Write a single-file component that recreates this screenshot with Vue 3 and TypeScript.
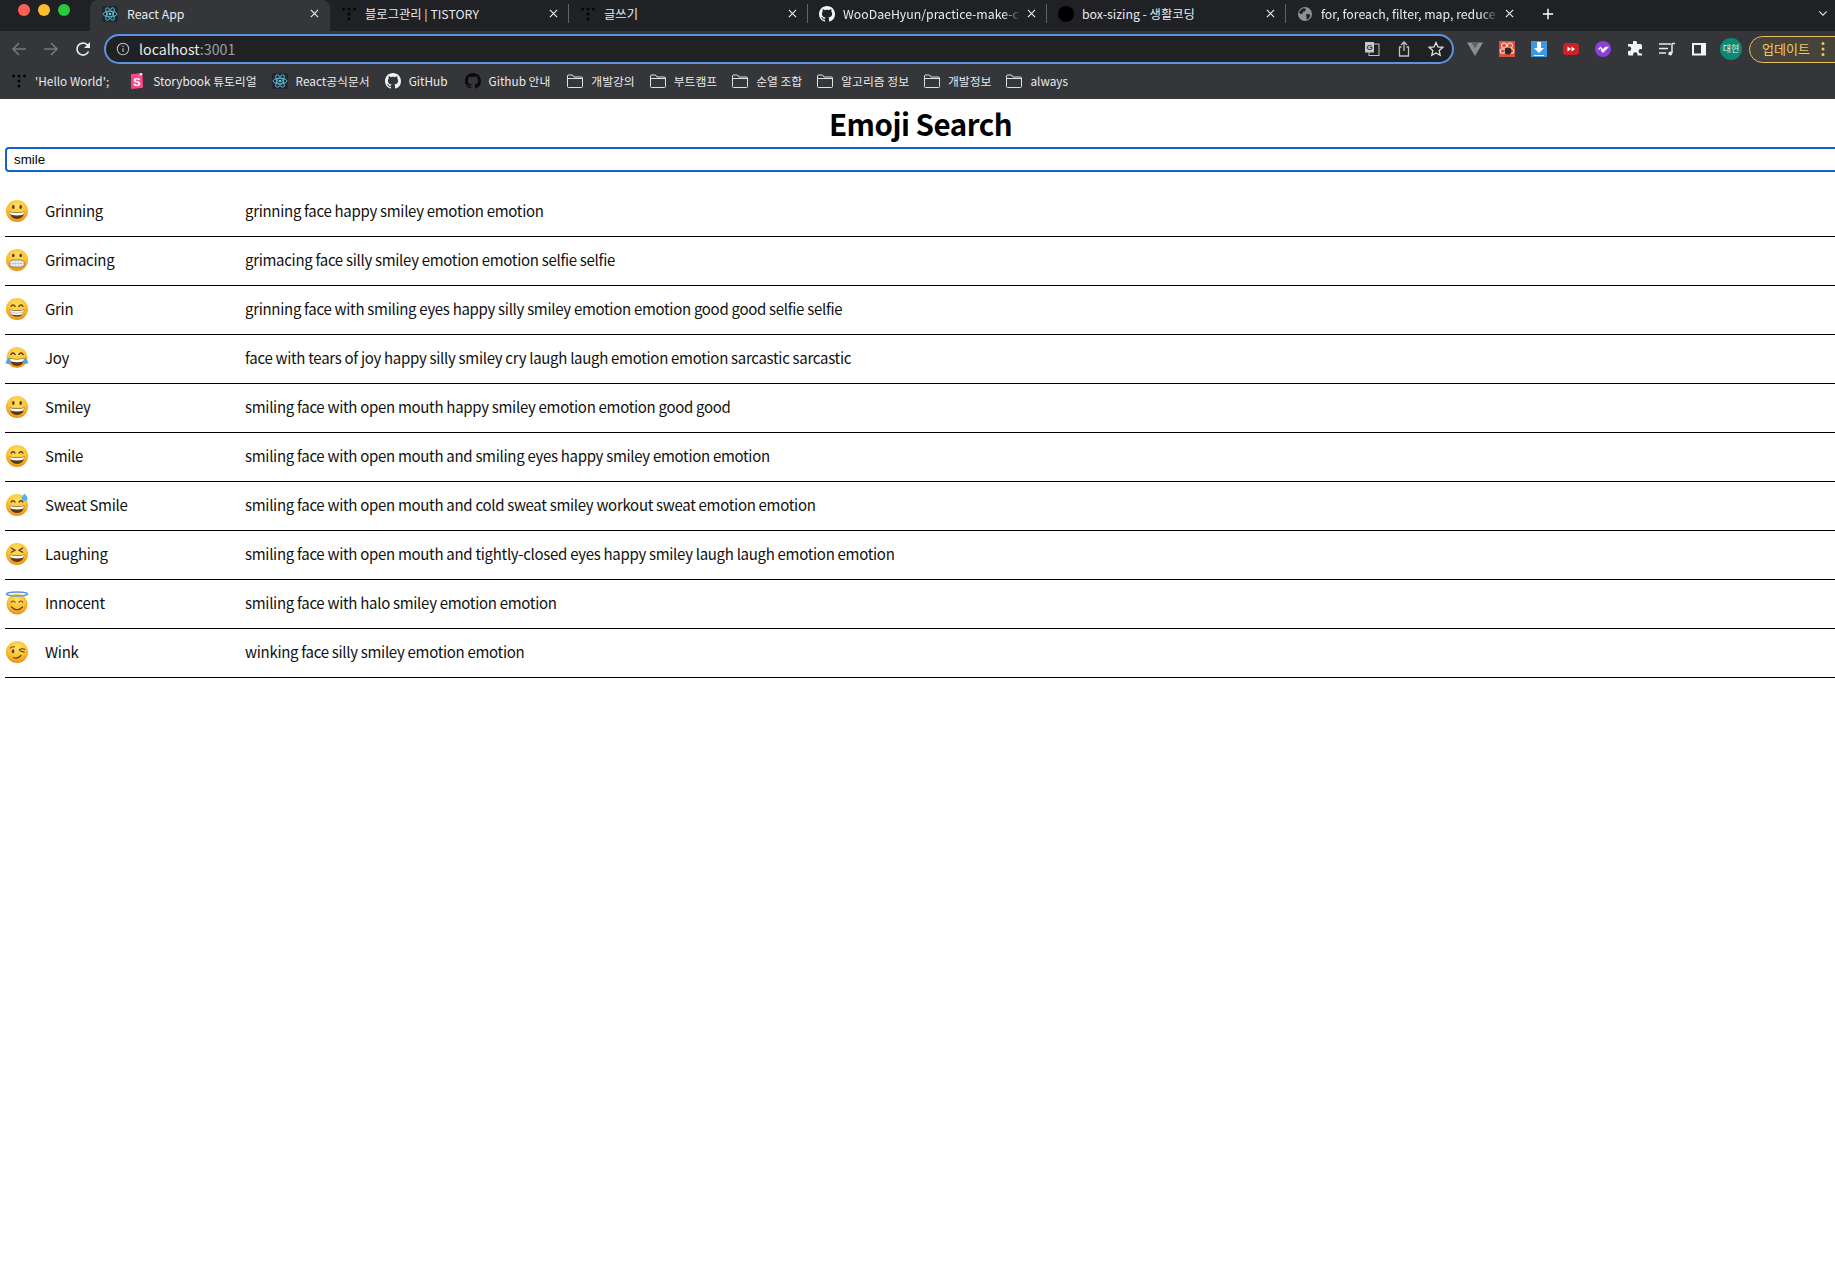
<template>
  <div class="window">
    <!-- shared icons -->
    <svg class="sprite" aria-hidden="true">
      <defs>
        <radialGradient id="face" cx="50%" cy="30%" r="75%">
          <stop offset="0" stop-color="#ffe168" />
          <stop offset="0.6" stop-color="#fbbf2d" />
          <stop offset="1" stop-color="#e8810f" />
        </radialGradient>
        <symbol id="react" viewBox="0 0 16 16">
          <rect width="16" height="16" rx="2" fill="#23272f" />
          <g fill="none" stroke="#5fd0ea" stroke-width="0.8">
            <ellipse cx="8" cy="8" rx="7" ry="2.8" />
            <ellipse cx="8" cy="8" rx="7" ry="2.8" transform="rotate(60 8 8)" />
            <ellipse cx="8" cy="8" rx="7" ry="2.8" transform="rotate(120 8 8)" />
          </g>
          <circle cx="8" cy="8" r="1.3" fill="#5fd0ea" />
        </symbol>
        <symbol id="tistory" viewBox="0 0 16 16">
          <g fill="#050505">
            <circle cx="2.5" cy="3" r="1.5" />
            <circle cx="8" cy="3" r="1.5" />
            <circle cx="13.5" cy="3" r="1.5" />
            <circle cx="8" cy="8" r="1.5" />
            <circle cx="8" cy="13" r="1.5" />
          </g>
        </symbol>
        <symbol id="github" viewBox="0 0 16 16">
          <path
            fill="currentColor"
            d="M8 0C3.58 0 0 3.58 0 8c0 3.54 2.29 6.53 5.47 7.59.4.07.55-.17.55-.38 0-.19-.01-.82-.01-1.49-2.01.37-2.53-.49-2.69-.94-.09-.23-.48-.94-.82-1.13-.28-.15-.68-.52-.01-.53.63-.01 1.08.58 1.23.82.72 1.21 1.87.87 2.33.66.07-.52.28-.87.51-1.07-1.78-.2-3.64-.89-3.64-3.95 0-.87.31-1.59.82-2.15-.08-.2-.36-1.02.08-2.12 0 0 .67-.21 2.2.82.64-.18 1.32-.27 2-.27s1.36.09 2 .27c1.53-1.04 2.2-.82 2.2-.82.44 1.1.16 1.92.08 2.12.51.56.82 1.27.82 2.15 0 3.07-1.87 3.75-3.65 3.95.29.25.54.73.54 1.48 0 1.07-.01 1.93-.01 2.2 0 .21.15.46.55.38A8.01 8.01 0 0 0 16 8c0-4.42-3.58-8-8-8z"
          />
        </symbol>
        <symbol id="folder" viewBox="0 0 16 14">
          <path
            fill="none"
            stroke="#dfe1e5"
            stroke-width="1"
            d="M.5 2A1 1 0 0 1 1.5 1h4l1.5 2h7.5a1 1 0 0 1 1 1v8.5a1 1 0 0 1-1 1h-13a1 1 0 0 1-1-1zM.5 4.5h15"
          />
        </symbol>
        <symbol id="storybook" viewBox="0 0 16 16">
          <path fill="#ff4785" d="M2 1.2 13.4 0l.6 14.8L2.2 16z" />
          <path fill="#fff" d="M10.8.3v2.4l1.3-.8 1 .7V.2z" />
          <text x="8" y="12.5" text-anchor="middle" class="sb-letter">S</text>
        </symbol>
        <symbol id="globe" viewBox="0 0 16 16">
          <circle cx="8" cy="8" r="7" fill="#8d9094" />
          <path
            fill="#202124"
            d="M4 3.5 7 2l2 1.2-1 2-2 .5-.5 2-2 .2-1.5-1.5zM9 8l3.5.2.8 1.8L11 13.5l-1.5-.5L9.5 10.500z"
          />
        </symbol>

        <symbol id="e-grinning" viewBox="0 0 24 24">
          <circle cx="12" cy="12" r="11" fill="url(#face)" />
          <ellipse cx="8.300" cy="8" rx="1.300" ry="2" fill="#5b3a13" />
          <ellipse cx="15.700" cy="8" rx="1.300" ry="2" fill="#5b3a13" />
          <path d="M4.500 12.500Q12 14.500 19.500 12.500 18.500 20 12 20 5.500 20 4.500 12.500Z" fill="#5b3a13" />
          <path d="M5 13Q12 15 19 13 18.800 15 18 15.800 12 17.300 6 15.800 5.200 15 5 13Z" fill="#fff" />
        </symbol>
        <symbol id="e-grimacing" viewBox="0 0 24 24">
          <circle cx="12" cy="12" r="11" fill="url(#face)" />
          <ellipse cx="8.300" cy="7.500" rx="1.300" ry="1.800" fill="#5b3a13" />
          <ellipse cx="15.700" cy="7.500" rx="1.300" ry="1.800" fill="#5b3a13" />
          <rect x="4.500" y="12" width="15" height="7" rx="3.400" fill="#f4f5f6" stroke="#6b4a1c" stroke-width="0.600" />
          <path d="M4.500 15.500h15M8 12.200v6.600M10.700 12v7M13.300 12v7M16 12.200v6.600" stroke="#a3a6aa" stroke-width="0.500" />
        </symbol>
        <symbol id="e-grin" viewBox="0 0 24 24">
          <circle cx="12" cy="12" r="11" fill="url(#face)" />
          <path d="M5.800 9.800Q8 5.800 10.500 9.800M13.500 9.800Q16 5.800 18.200 9.800" fill="none" stroke="#5b3a13" stroke-width="1.300" />
          <path d="M4.500 12.500Q12 14.500 19.500 12.500 18.500 19.800 12 19.800 5.500 19.800 4.500 12.500Z" fill="#5b3a13" />
          <path d="M5 13Q12 15 19 13 18.500 17 17 17.500 12 19 7 17.500 5.500 17 5 13Z" fill="#f4f5f6" />
          <path d="M5.300 15.300Q12 17 18.700 15.300" fill="none" stroke="#9a9da1" stroke-width="0.500" />
        </symbol>
        <symbol id="e-joy" viewBox="0 0 24 24">
          <circle cx="12" cy="11.500" r="10.500" fill="url(#face)" />
          <path d="M5.500 9Q8 5 10.500 9M13.500 9Q16 5 18.500 9" fill="none" stroke="#5b3a13" stroke-width="1.300" />
          <path d="M4.500 12Q12 14 19.500 12 18.500 20 12 20 5.500 20 4.500 12Z" fill="#5b3a13" />
          <path d="M5 12.500Q12 14.500 19 12.500 18.800 15 18 15.500 12 17 6 15.500 5.200 15 5 12.500Z" fill="#fff" />
          <path d="M3.800 11.500Q6 15 5.500 17.500 3 18.800 0.500 17 1.200 14 3.800 11.500Z" fill="#4aa8ea" />
          <path d="M20.200 11.500Q18 15 18.500 17.500 21 18.800 23.500 17 22.800 14 20.200 11.500Z" fill="#4aa8ea" />
        </symbol>
        <symbol id="e-smile" viewBox="0 0 24 24">
          <circle cx="12" cy="12" r="11" fill="url(#face)" />
          <path d="M5.800 9.500Q8 6 10.400 9.500M13.600 9.500Q16 6 18.200 9.500" fill="none" stroke="#5b3a13" stroke-width="1.300" />
          <path d="M4.500 12.500Q12 14.500 19.500 12.500 18.500 20 12 20 5.500 20 4.500 12.500Z" fill="#5b3a13" />
          <path d="M5 13Q12 15 19 13 18.800 15 18 15.800 12 17.300 6 15.800 5.200 15 5 13Z" fill="#fff" />
        </symbol>
        <symbol id="e-sweat" viewBox="0 0 24 24">
          <circle cx="12" cy="12" r="11" fill="url(#face)" />
          <path d="M5.800 9.500Q8 6 10.400 9.500M13.600 9.500Q16 6 18.200 9.500" fill="none" stroke="#5b3a13" stroke-width="1.300" />
          <path d="M4.500 12.500Q12 14.500 19.500 12.500 18.500 20 12 20 5.500 20 4.500 12.500Z" fill="#5b3a13" />
          <path d="M5 13Q12 15 19 13 18.800 15 18 15.800 12 17.300 6 15.800 5.200 15 5 13Z" fill="#fff" />
          <path d="M19.500 0.500Q22.800 4 22.500 5.800 22 8 19.500 8 17 8 16.500 5.800 16.500 4 19.500 0.500Z" fill="#56b2ee" />
        </symbol>
        <symbol id="e-laughing" viewBox="0 0 24 24">
          <circle cx="12" cy="12" r="11" fill="url(#face)" />
          <path d="M5.800 5.800 10 8.300 5.800 10.500M18.200 5.800 14 8.300 18.200 10.500" fill="none" stroke="#5b3a13" stroke-width="1.300" />
          <path d="M4.500 12.500Q12 14.500 19.500 12.500 18.500 20 12 20 5.500 20 4.500 12.500Z" fill="#5b3a13" />
          <path d="M5 13Q12 15 19 13 18.800 15 18 15.800 12 17.300 6 15.800 5.200 15 5 13Z" fill="#fff" />
        </symbol>
        <symbol id="e-innocent" viewBox="0 0 24 24">
          <circle cx="12" cy="13" r="10.500" fill="url(#face)" />
          <ellipse cx="12" cy="3" rx="10.500" ry="2" fill="none" stroke="#5b93ea" stroke-width="1.500" />
          <path d="M6 11.500Q8 8.500 10.400 11.500M13.600 11.500Q16 8.500 18 11.500" fill="none" stroke="#5b3a13" stroke-width="1.200" />
          <path d="M6.500 16Q12 21.500 17.500 16" fill="none" stroke="#5b3a13" stroke-width="1.200" stroke-linecap="round" />
        </symbol>
        <symbol id="e-wink" viewBox="0 0 24 24">
          <circle cx="12" cy="12" r="11" fill="url(#face)" />
          <path d="M5 8.300Q7 6.300 9.800 7M14 9.800Q17 7.800 20 9.500M14.300 10.500 19.500 12.300" fill="none" stroke="#5b3a13" stroke-width="1.100" />
          <ellipse cx="8" cy="11.300" rx="1.300" ry="2" fill="#5b3a13" />
          <path d="M8.500 17.500Q12.500 19.500 16 15.500" fill="none" stroke="#5b3a13" stroke-width="1.200" stroke-linecap="round" />
        </symbol>
      </defs>
    </svg>

    <header class="chrome">
      <div class="tabstrip">
        <div class="lights">
          <i class="traffic red" />
          <i class="traffic amber" />
          <i class="traffic green" />
        </div>
        <div v-for="(tab, i) in tabs" :key="tab.title" class="tab" :class="{ active: i === 0 }">
          <svg v-if="tab.icon" class="tab-icon"><use :href="'#' + tab.icon" /></svg>
          <i v-else class="tab-icon black-dot" />
          <span class="tab-title" :class="{ fade: tab.fade }">{{ tab.title }}</span>
          <svg class="tab-close" viewBox="0 0 10 10">
            <path d="M1 1l8 8M9 1l-8 8" stroke="#e8eaed" stroke-width="1.300" />
          </svg>
        </div>
        <svg class="new-tab" viewBox="0 0 14 14">
          <path d="M7 1v12M1 7h12" stroke="#fff" stroke-width="1.700" />
        </svg>
        <svg class="tab-menu" viewBox="0 0 12 8">
          <path d="M1.500 1.500 6 6l4.500-4.500" fill="none" stroke="#dfe1e5" stroke-width="1.400" />
        </svg>
      </div>

      <div class="toolbar">
        <svg class="nav-icon" viewBox="0 0 16 16">
          <path d="M15 8H2M8 2 2 8l6 6" fill="none" stroke="#75777b" stroke-width="1.600" />
        </svg>
        <svg class="nav-icon" viewBox="0 0 16 16">
          <path d="M1 8h13M8 2l6 6-6 6" fill="none" stroke="#75777b" stroke-width="1.600" />
        </svg>
        <svg class="nav-icon" viewBox="0 0 16 16">
          <path d="M13.500 10.500A6 6 0 1 1 12.300 3.800L14 5.500" fill="none" stroke="#e8eaed" stroke-width="1.700" />
          <path d="M15 1v6H9z" fill="#e8eaed" />
        </svg>

        <div class="omnibox">
          <svg class="omni-info" viewBox="0 0 16 16">
            <circle cx="8" cy="8" r="6.500" fill="none" stroke="#bdc1c6" stroke-width="1.200" />
            <path d="M8 7v4.500M8 4.300v1.400" stroke="#bdc1c6" stroke-width="1.300" />
          </svg>
          <span class="omni-url">localhost<span class="omni-port">:3001</span></span>
          <div class="omni-actions">
            <svg class="omni-icon" viewBox="0 0 16 16">
              <rect x="5" y="3" width="10" height="11.500" fill="none" stroke="#bdc1c6" />
              <rect x="1" y="1" width="9" height="10.500" fill="#c4c7cb" />
              <text x="5.500" y="9" text-anchor="middle" class="tr-letter">G</text>
            </svg>
            <svg class="omni-icon" viewBox="0 0 16 16">
              <path d="M5.500 6H3.500v9h9V6h-2M8 10V1.500M5 4l3-3 3 3" fill="none" stroke="#bdc1c6" stroke-width="1.300" />
            </svg>
            <svg class="omni-icon" viewBox="0 0 16 16">
              <path d="M8 1.500l2 4.400 4.800.5-3.600 3.200 1 4.700L8 11.900 3.800 14.300l1-4.700L1.200 6.400 6 5.900z" fill="none" stroke="#dfe1e5" stroke-width="1.300" />
            </svg>
          </div>
        </div>

        <div class="extensions">
          <svg class="ext" viewBox="0 0 16 16">
            <path d="M0 1.500h16L8 15z" fill="#8d8f91" />
            <path d="M4.500 1.500h7L8 7.500z" fill="#5f6164" />
          </svg>
          <svg class="ext" viewBox="0 0 16 16">
            <rect width="16" height="16" fill="#d9503f" />
            <circle cx="5" cy="4.500" r="2.500" fill="none" stroke="#f6d6d0" stroke-width="1.100" />
            <circle cx="11" cy="4.500" r="2.500" fill="none" stroke="#f6d6d0" stroke-width="1.100" />
            <circle cx="3.500" cy="10" r="2.300" fill="none" stroke="#f6d6d0" stroke-width="1.100" />
            <circle cx="12.500" cy="10" r="2.300" fill="none" stroke="#f6d6d0" stroke-width="1.100" />
            <circle cx="9" cy="10" r="3.400" fill="#33211e" />
          </svg>
          <svg class="ext" viewBox="0 0 16 16">
            <rect width="16" height="16" fill="#3d9ae0" />
            <path d="M6 1h4v6h3L8 12 3 7h3zM3 14h10v1H3z" fill="#fff" />
          </svg>
          <svg class="ext" viewBox="0 0 16 16">
            <rect y="2" width="16" height="12" rx="3.500" fill="#cf2027" />
            <path d="M4.500 5.500 8 8l-3.500 2.500zM8.500 5.500 12 8l-3.500 2.500z" fill="#fff" />
          </svg>
          <svg class="ext" viewBox="0 0 16 16">
            <circle cx="8" cy="8" r="8" fill="#8b3fd9" />
            <path d="M3.500 8.500l2-2 2.500 2.500 2.500-2.500h2l-4.500 4.500-2-2" fill="none" stroke="#fff" stroke-width="1.300" />
          </svg>
          <svg class="ext" viewBox="0 0 16 16">
            <path
              fill="#f1f3f4"
              d="M6 .5a2.200 2.200 0 0 1 4 1.300V3h3.500A1.500 1.500 0 0 1 15 4.500V8h-1.200a2.200 2.200 0 0 0 0 4.500H15v2H10.500v-1a2.200 2.200 0 0 0-4.400 0v1H2.500A1.500 1.500 0 0 1 1 13V10h1a2.200 2.200 0 0 0 0-4.500H1V3h5z"
            />
          </svg>
          <svg class="ext" viewBox="0 0 16 16">
            <path d="M0 3h12M0 7.500h9M0 12h7" stroke="#e8eaed" stroke-width="1.300" />
            <path d="M13 2.500h3M13 2.500V12" fill="none" stroke="#e8eaed" stroke-width="1.500" />
            <circle cx="11.300" cy="12.500" r="2" fill="#e8eaed" />
          </svg>
          <svg class="ext" viewBox="0 0 16 16">
            <rect x="1" y="2" width="14" height="12.500" fill="#f4f5f6" />
            <rect x="3" y="4" width="7" height="8.500" fill="#35363a" />
          </svg>
          <span class="avatar">대현</span>
        </div>

        <div class="update">
          <span>업데이트</span>
          <svg class="update-dots" viewBox="0 0 4 16">
            <circle cx="2" cy="2.500" r="1.500" />
            <circle cx="2" cy="8" r="1.500" />
            <circle cx="2" cy="13.500" r="1.500" />
          </svg>
        </div>
      </div>

      <div class="bookmarks">
        <div v-for="mark in bookmarks" :key="mark.label" class="bookmark" :class="{ dark: mark.dark }">
          <svg class="bookmark-icon"><use :href="'#' + mark.icon" /></svg>
          <span>{{ mark.label }}</span>
        </div>
      </div>
    </header>

    <main class="page">
      <h1 class="title">Emoji Search</h1>
      <input v-model="query" class="search" type="text" />
      <ul class="results">
        <li v-for="row in rows" :key="row.name" class="result">
          <svg class="emoji"><use :href="'#e-' + row.emoji" /></svg>
          <span class="name">{{ row.name }}</span>
          <span class="keywords">{{ row.keywords }}</span>
        </li>
      </ul>
    </main>
  </div>
</template>

<script setup lang="ts">
import { ref } from 'vue';

interface Tab {
  title: string;
  icon: string;
  fade?: boolean;
}

const query = ref('smile');

const tabs: Tab[] = [
  { title: 'React App', icon: 'react' },
  { title: '블로그관리 | TISTORY', icon: 'tistory' },
  { title: '글쓰기', icon: 'tistory' },
  { title: 'WooDaeHyun/practice-make-c', icon: 'github', fade: true },
  { title: 'box-sizing - 생활코딩', icon: '' },
  { title: 'for, foreach, filter, map, reduce', icon: 'globe', fade: true },
];

const bookmarks = [
  { label: "'Hello World';", icon: 'tistory' },
  { label: 'Storybook 튜토리얼', icon: 'storybook' },
  { label: 'React공식문서', icon: 'react' },
  { label: 'GitHub', icon: 'github' },
  { label: 'Github 안내', icon: 'github', dark: true },
  { label: '개발강의', icon: 'folder' },
  { label: '부트캠프', icon: 'folder' },
  { label: '순열 조합', icon: 'folder' },
  { label: '알고리즘 정보', icon: 'folder' },
  { label: '개발정보', icon: 'folder' },
  { label: 'always', icon: 'folder' },
];

const rows = [
  { emoji: 'grinning', name: 'Grinning', keywords: 'grinning face happy smiley emotion emotion' },
  { emoji: 'grimacing', name: 'Grimacing', keywords: 'grimacing face silly smiley emotion emotion selfie selfie' },
  { emoji: 'grin', name: 'Grin', keywords: 'grinning face with smiling eyes happy silly smiley emotion emotion good good selfie selfie' },
  { emoji: 'joy', name: 'Joy', keywords: 'face with tears of joy happy silly smiley cry laugh laugh emotion emotion sarcastic sarcastic' },
  { emoji: 'grinning', name: 'Smiley', keywords: 'smiling face with open mouth happy smiley emotion emotion good good' },
  { emoji: 'smile', name: 'Smile', keywords: 'smiling face with open mouth and smiling eyes happy smiley emotion emotion' },
  { emoji: 'sweat', name: 'Sweat Smile', keywords: 'smiling face with open mouth and cold sweat smiley workout sweat emotion emotion' },
  { emoji: 'laughing', name: 'Laughing', keywords: 'smiling face with open mouth and tightly-closed eyes happy smiley laugh laugh emotion emotion' },
  { emoji: 'innocent', name: 'Innocent', keywords: 'smiling face with halo smiley emotion emotion' },
  { emoji: 'wink', name: 'Wink', keywords: 'winking face silly smiley emotion emotion' },
];
</script>

<style scoped>
.window {
  width: 1835px;
  height: 1287px;
  overflow: hidden;
  background: #fff;
  font-family: 'Noto Sans CJK KR', 'Noto Sans', sans-serif;
}

.sprite {
  position: absolute;
  width: 0;
  height: 0;
}

.sb-letter {
  font: 700 11px 'Liberation Sans', sans-serif;
  fill: #fff;
}

.tr-letter {
  font: 700 8px 'Liberation Sans', sans-serif;
  fill: #35363a;
}

/* browser chrome */
.chrome {
  height: 99px;
  background: #35363a;
  color: #e8eaed;
}

.tabstrip {
  height: 31px;
  display: flex;
  align-items: stretch;
  background: #202124;
  padding-right: 7px;
}

.lights {
  width: 90px;
  flex: none;
  display: flex;
  gap: 8px;
  padding: 4px 0 0 18px;
  box-sizing: border-box;
}

.traffic {
  width: 12px;
  height: 12px;
  border-radius: 50%;
}

.red { background: #ff5f57; }
.amber { background: #febc2e; }
.green { background: #28c840; }

.tab {
  width: 239px;
  flex: none;
  box-sizing: border-box;
  display: flex;
  align-items: center;
  padding: 0 11px 4px 11px;
  font-size: 12.3px;
  line-height: 16px;
  position: relative;
}

.tab.active {
  width: 240px;
  background: #35363a;
  border-radius: 8px 8px 0 0;
  padding-left: 12px;
}

.tab.active .tab-icon {
  margin-right: 9px;
}

.tab:not(.active) + .tab::before {
  content: '';
  position: absolute;
  left: -1px;
  top: 4px;
  height: 19px;
  width: 1px;
  background: #5f6368;
}

.tab-icon {
  width: 16px;
  height: 16px;
  flex: none;
  color: #f1f3f4;
  margin-right: 8px;
}

.black-dot {
  border-radius: 50%;
  background: #000;
}

.tab-title {
  flex: 1;
  min-width: 0;
  white-space: nowrap;
  overflow: hidden;
}

.tab-title.fade {
  -webkit-mask-image: linear-gradient(to right, #000 90%, transparent 100%);
  mask-image: linear-gradient(to right, #000 90%, transparent 100%);
}

.tab-close {
  width: 9px;
  height: 9px;
  flex: none;
  margin-left: 6px;
}

.new-tab {
  width: 12px;
  height: 12px;
  flex: none;
  align-self: center;
  margin: 0 0 4px 17px;
}

.tab-menu {
  width: 10px;
  height: 7px;
  flex: none;
  align-self: center;
  margin: 0 0 4px auto;
}

.toolbar {
  height: 36px;
  display: flex;
  align-items: center;
  padding-left: 11px;
}

.nav-icon {
  width: 16px;
  height: 16px;
  flex: none;
  margin-right: 16px;
}

.omnibox {
  width: 1350px;
  height: 30px;
  flex: none;
  box-sizing: border-box;
  margin-left: -3px;
  border: 2px solid #5d93e1;
  border-radius: 15px;
  background: #202124;
  display: flex;
  align-items: center;
  padding: 0 8px 0 10px;
}

.omni-info {
  width: 14px;
  height: 14px;
  flex: none;
  margin-right: 9px;
}

.omni-url {
  font-size: 14.2px;
  line-height: 18px;
  color: #e8eaed;
}

.omni-port {
  color: #9aa0a6;
}

.omni-actions {
  margin-left: auto;
  display: flex;
  gap: 16px;
}

.omni-icon {
  width: 16px;
  height: 16px;
}

.extensions {
  display: flex;
  align-items: center;
  gap: 16px;
  margin-left: 13px;
}

.ext {
  width: 16px;
  height: 16px;
  flex: none;
}

.avatar {
  width: 22px;
  height: 22px;
  margin-left: -3px;
  border-radius: 50%;
  background: #0a8a74;
  color: #e8eaed;
  font-size: 9px;
  line-height: 22px;
  text-align: center;
  flex: none;
}

.update {
  width: 100px;
  height: 27px;
  flex: none;
  box-sizing: border-box;
  margin-left: 7px;
  border: 1.500px solid #e8c05f;
  border-radius: 14px;
  background: #46433a;
  color: #f0c860;
  font-size: 13px;
  line-height: 16px;
  display: flex;
  align-items: center;
  padding-left: 12px;
}

.update-dots {
  width: 4px;
  height: 16px;
  margin-left: 11px;
  fill: #f0c860;
}

.bookmarks {
  height: 28px;
  display: flex;
  align-items: center;
  gap: 15px;
  padding-left: 11px;
  font-size: 11.8px;
  line-height: 16px;
}

.bookmark {
  display: flex;
  align-items: center;
  gap: 8px;
  white-space: nowrap;
}

.bookmark:first-child {
  margin-right: 5px;
}

.bookmark-icon {
  width: 16px;
  height: 16px;
  flex: none;
  color: #f1f3f4;
}

.bookmark.dark {
  margin: 0 2px;
}

.bookmark.dark .bookmark-icon {
  color: #0b0b0c;
}

/* app */
.page {
  margin-left: 5px;
  width: 100%;
  color: #000;
}

.title {
  margin: 0;
  padding-right: 4px;
  font-size: 29.5px;
  letter-spacing: -0.5px;
  line-height: 48px;
  font-weight: 700;
  text-align: center;
}

.search {
  display: block;
  width: 100%;
  height: 25px;
  box-sizing: border-box;
  border: 2px solid #1463cc;
  border-radius: 4px;
  padding: 0 7px;
  font: 13.333px 'Liberation Sans', Arial, sans-serif;
  color: #000;
  outline: none;
}

.results {
  list-style: none;
  margin: 16px 0 0;
  padding: 0;
}

.result {
  height: 49px;
  box-sizing: border-box;
  border-bottom: 1px solid #000;
  padding-bottom: 3px;
  display: grid;
  grid-template-columns: 40px 200px 1fr;
  align-items: center;
  font-size: 15px;
  letter-spacing: -0.3px;
  line-height: 24px;
  color: #111;
}

.emoji {
  width: 24px;
  height: 24px;
}
</style>

<style>
html,
body {
  margin: 0;
  overflow: hidden;
}
</style>
